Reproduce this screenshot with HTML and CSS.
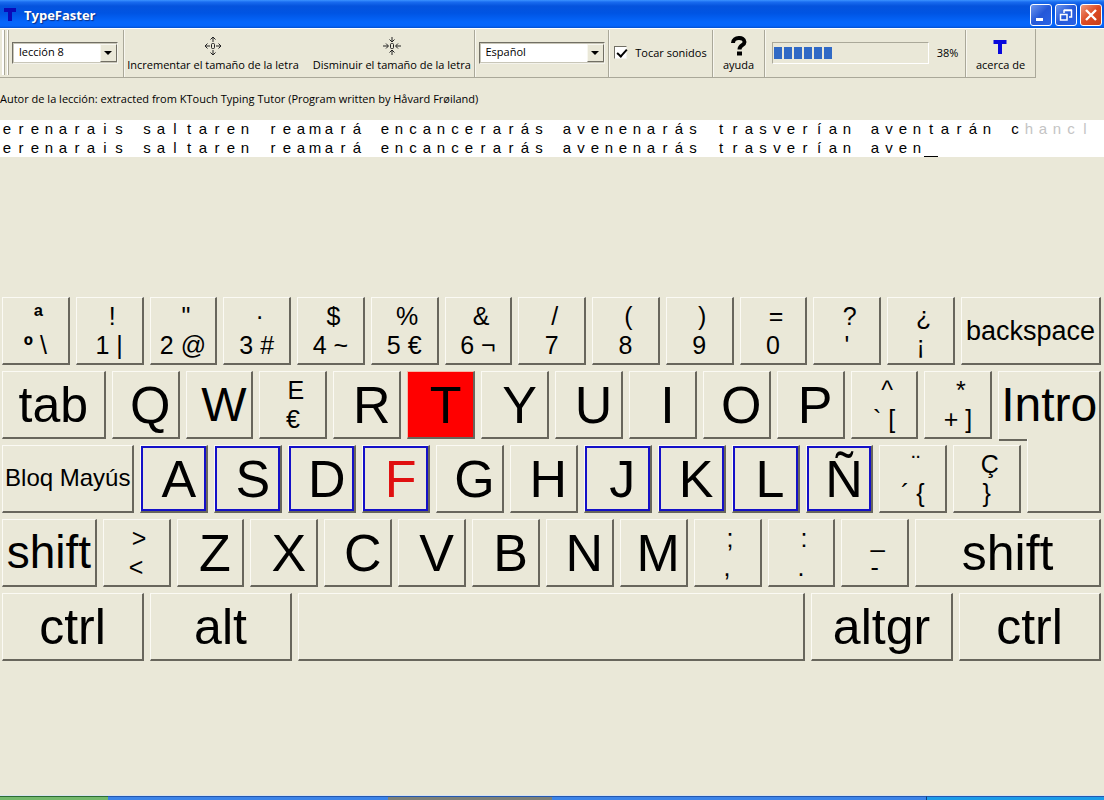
FILE: index.html
```html
<!DOCTYPE html>
<html lang="es">
<head>
<meta charset="utf-8">
<meta name="viewport" content="width=device-width, initial-scale=1">
<title>TypeFaster</title>
<link rel="stylesheet" href="styles.css">
</head>
<body>
<header class="titlebar">
  <svg class="app-icon" viewBox="0 0 14 16" aria-hidden="true"><path d="M0 1h12v4H8v9H4V5H0z" fill="#0a0ab8"/></svg>
  <h1 class="title">TypeFaster</h1>
  <div class="window-buttons">
    <button class="win-btn" type="button" aria-label="Minimizar"><svg viewBox="0 0 20 20"><path d="M5 13h7v3H5z" fill="#fff"/></svg></button>
    <button class="win-btn" type="button" aria-label="Restaurar"><svg viewBox="0 0 20 20" fill="none" stroke="#fff"><path d="M8 8V5.500h7.500V12H13M8 5h8" stroke-width="1.500"/><path d="M4.500 9.500h6.500v5.500H4.500zM4 9.500h7.500" stroke-width="1.500"/></svg></button>
    <button class="win-btn close" type="button" aria-label="Cerrar"><svg viewBox="0 0 20 20"><path d="M5 5l10 10M15 5L5 15" stroke="#fff" stroke-width="2.400"/></svg></button>
  </div>
</header>

<nav class="toolbar">
  <span class="grip"></span>
  <div class="band band-lesson">
    <span class="combo combo-lesson">
      <select aria-label="Lección"><option>lección 8</option></select>
      <span class="combo-arrow"></span>
    </span>
  </div>
  <div class="band band-size">
    <button class="tool" type="button">
      <svg width="18" height="20" viewBox="0 0 18 20" fill="none" stroke="#222"><path d="M9 1v5M9 14v5M1 10h5M12 10h5M6.500 3.500L9 1l2.500 2.500M6.500 16.500L9 19l2.500-2.500M3.500 7.500L1 10l2.500 2.500M14.500 7.500L17 10l-2.500 2.500"/><rect x="7.500" y="7.500" width="3" height="5" rx="1"/></svg>
      <span>Incrementar el tamaño de la letra</span>
    </button>
    <button class="tool" type="button">
      <svg width="18" height="20" viewBox="0 0 18 20" fill="none" stroke="#222"><path d="M9 1v5M9 14v5M0 10h5M13 10h5M6.500 3.500L9 6l2.500-2.500M6.500 16.500L9 14l2.500 2.500M3 7.500L5.500 10 3 12.500M15 7.500L12.500 10l2.500 2.500"/><rect x="7.500" y="7.500" width="3" height="5" rx="1"/></svg>
      <span>Disminuir el tamaño de la letra</span>
    </button>
  </div>
  <div class="band band-language">
    <span class="combo combo-language">
      <select aria-label="Idioma"><option>Español</option></select>
      <span class="combo-arrow"></span>
    </span>
  </div>
  <div class="band band-sound">
    <label class="check"><input type="checkbox" checked><span>Tocar sonidos</span></label>
  </div>
  <div class="band band-help">
    <button class="tool" type="button">
      <svg width="18" height="20" viewBox="0 0 18 20" fill="none"><path d="M3 7C3 0.500 14.500 0.500 14.500 6c0 3.500-5 3-5 7.500" stroke="#000" stroke-width="4"/><path d="M7 15.500h5v4H7z" fill="#000"/></svg>
      <span>ayuda</span>
    </button>
  </div>
  <div class="band band-progress">
    <progress id="progress" max="100" value="38"></progress>
    <label for="progress">38%</label>
  </div>
  <div class="band band-about">
    <button class="tool" type="button">
      <svg width="18" height="20" viewBox="0 0 18 20"><path d="M2.500 4h13v4h-4.500v10H7V8H2.500z" fill="#0808dc"/></svg>
      <span>acerca de</span>
    </button>
  </div>
</nav>

<p class="author">Autor de la lección: extracted from KTouch Typing Tutor (Program written by Håvard Frøiland)</p>

<section class="lesson">
  <div class="line" data-text="erenarais saltaren reamará encancerarás avenenarás trasverían aventarán chancl" data-fade="73"></div>
  <div class="line" data-text="erenarais saltaren reamará encancerarás avenenarás trasverían aven" data-cursor></div>
</section>

<main class="keyboard">
  <div class="row">
    <button class="key pair"><span><b>ª</b></span><span><b>º</b> \</span></button>
    <button class="key pair"><span>!</span><span>1 |</span></button>
    <button class="key pair"><span>"</span><span>2 @</span></button>
    <button class="key pair"><span>·</span><span>3 #</span></button>
    <button class="key pair"><span>$</span><span>4 ~</span></button>
    <button class="key pair"><span>%</span><span>5 €</span></button>
    <button class="key pair"><span>&amp;</span><span>6 ¬</span></button>
    <button class="key pair"><span>/</span><span>7</span></button>
    <button class="key pair"><span>(</span><span>8</span></button>
    <button class="key pair"><span>)</span><span>9</span></button>
    <button class="key pair"><span>=</span><span>0</span></button>
    <button class="key pair"><span>?</span><span>'</span></button>
    <button class="key pair"><span>¿</span><span>¡</span></button>
    <button class="key word w-backspace">backspace</button>
  </div>
  <div class="row">
    <button class="key word w-tab">tab</button>
    <button class="key">Q</button>
    <button class="key wide-glyph">W</button>
    <button class="key pair"><span>E</span><span>€</span></button>
    <button class="key">R</button>
    <button class="key target">T</button>
    <button class="key">Y</button>
    <button class="key">U</button>
    <button class="key">I</button>
    <button class="key">O</button>
    <button class="key">P</button>
    <button class="key pair"><span>^</span><span>` [</span></button>
    <button class="key pair"><span>*</span><span>+ ]</span></button>
    <button class="key word w-intro">Intro</button>
  </div>
  <div class="row">
    <button class="key word w-caps">Bloq Mayús</button>
    <button class="key home">A</button>
    <button class="key home">S</button>
    <button class="key home">D</button>
    <button class="key home finger">F</button>
    <button class="key">G</button>
    <button class="key">H</button>
    <button class="key home">J</button>
    <button class="key home">K</button>
    <button class="key home">L</button>
    <button class="key home">Ñ</button>
    <button class="key pair"><span>¨</span><span>´ {</span></button>
    <button class="key pair"><span>Ç</span><span>}</span></button>
    <span class="key intro-lower"></span>
  </div>
  <div class="row">
    <button class="key word w-lshift">shift</button>
    <button class="key pair"><span>&gt;</span><span>&lt;</span></button>
    <button class="key">Z</button>
    <button class="key">X</button>
    <button class="key">C</button>
    <button class="key">V</button>
    <button class="key">B</button>
    <button class="key">N</button>
    <button class="key">M</button>
    <button class="key pair"><span>;</span><span>,</span></button>
    <button class="key pair"><span>:</span><span>.</span></button>
    <button class="key pair"><span>_</span><span>-</span></button>
    <button class="key word w-rshift">shift</button>
  </div>
  <div class="row">
    <button class="key word w-mod">ctrl</button>
    <button class="key word w-mod">alt</button>
    <button class="key word w-space" aria-label="Espacio"></button>
    <button class="key word w-mod">altgr</button>
    <button class="key word w-mod">ctrl</button>
  </div>
</main>

<footer class="taskbar"><span class="start"></span><span class="tasks"></span><span class="active-task"></span><span class="tasks"></span><span class="tray"></span></footer>
<script src="script.js"></script>
</body>
</html>
```

FILE: styles.css
```css
* { box-sizing: border-box; }

body {
  margin: 0;
  min-height: 100vh;
  display: flex;
  flex-direction: column;
  background: #eae8d8;
  color: #000;
  font: 11px/14px "Open Sans", "Liberation Sans", sans-serif;
}

button, select { font: inherit; color: inherit; }

/* Title bar */
.titlebar {
  display: flex;
  align-items: center;
  height: 29px;
  padding: 0 2px 0 4px;
  background: linear-gradient(#3c93ff 0, #1a6cf0 2px, #0553dd 6px, #0054e3 13px, #0566fb 22px, #0565fb 26px, #0450cc 28px, #fff 28px);
}
.app-icon { width: 14px; height: 16px; }
.title {
  margin: 0 0 0 6px;
  color: #fff;
  font: bold 13px/18px "Open Sans", sans-serif;
  text-shadow: 1px 1px 1px #0a2f87;
}
.window-buttons { display: flex; gap: 3px; margin-left: auto; }
.win-btn {
  width: 22px;
  height: 22px;
  padding: 0;
  border: 1px solid #fff;
  border-radius: 3px;
  background: linear-gradient(135deg, #6e97ee, #2458d8 50%, #2a63e6);
}
.win-btn svg { display: block; width: 20px; height: 20px; }
.win-btn.close { background: linear-gradient(135deg, #ee9a80, #dd4a22 50%, #c8401a); }

/* Toolbar */
.toolbar {
  display: flex;
  align-self: flex-start;
  height: 49px;
  padding-top: 1px;
  border-right: 1px solid #aaa899;
  border-bottom: 1px solid #aaa899;
}
.grip {
  width: 9px;
  margin: 0 2px 2px 0;
  border-right: 1px solid #aaa899;
  background: linear-gradient(90deg, #eae8d8 2px, #fff 2px 4px, #aaa899 4px 5px, #eae8d8 5px 7px, #fff 7px);
}
.band {
  display: flex;
  align-items: center;
  justify-content: center;
  padding-bottom: 2px;
}
.band + .band { border-left: 1px solid #aaa899; box-shadow: inset 1px 0 #f8f7f0; }
.band-lesson { width: 112px; justify-content: flex-start; padding-left: 1px; }
.band-size { width: 351px; gap: 14px; }
.band-language { width: 134px; }
.band-sound { width: 104px; }
.band-help { width: 52px; }
.band-progress { width: 201px; gap: 8px; }
.band-about { width: 70px; }

.tool {
  display: flex;
  flex-direction: column;
  align-items: center;
  gap: 2px;
  padding: 2px 0 0;
  border: 0;
  background: none;
  white-space: nowrap;
}
.tool svg { display: block; }

.combo { position: relative; height: 22px; }
.combo-lesson { width: 106px; }
.combo-language { width: 126px; }
.combo select {
  display: block;
  width: 100%;
  height: 22px;
  padding: 0 20px 2px 6px;
  border: 1px solid;
  border-color: #716f64 #f4f3ec #f4f3ec #716f64;
  border-radius: 0;
  outline: 1px solid #c8c6b8;
  outline-offset: -2px;
  background: #fff;
  appearance: none;
}
.combo-arrow {
  position: absolute;
  top: 2px;
  right: 1px;
  width: 17px;
  height: 18px;
  border: 1px solid;
  border-color: #f8f7f0 #716f64 #716f64 #f8f7f0;
  background: #eae8d8;
  pointer-events: none;
}
.combo-arrow::after {
  content: "";
  position: absolute;
  top: 6px;
  left: 3px;
  border: 4px solid transparent;
  border-top-color: #000;
  border-bottom: 0;
}

.check { display: flex; align-items: center; gap: 8px; }
.check input {
  width: 13px;
  height: 13px;
  margin: 0;
  border: 1px solid;
  border-color: #716f64 #f4f3ec #f4f3ec #716f64;
  background: #fff;
  appearance: none;
}
.check input:checked::after {
  content: "";
  display: block;
  width: 8px;
  height: 4px;
  margin: 2px 0 0 2px;
  border: solid #000;
  border-width: 0 0 2px 2px;
  transform: rotate(-48deg);
}

progress {
  width: 157px;
  height: 22px;
  padding: 4px 1px;
  border: 1px solid;
  border-color: #aaa899 #fff #fff #aaa899;
  background: none;
  appearance: none;
}
progress::-webkit-progress-bar { background: none; }
progress::-webkit-progress-value { background: repeating-linear-gradient(90deg, #316ac5 0 8px, transparent 8px 10px); }

.author { margin: 14px 0; }

/* Lesson text: one fixed cell for each character */
.lesson {
  display: flex;
  flex-direction: column;
  gap: 1px;
  overflow: hidden;
  background: #fff;
  font-family: "Liberation Sans", Arial, sans-serif;
  font-size: 15px;
  line-height: 18px;
}
.line { display: flex; height: 18px; }
.cell { flex: none; width: 14px; text-align: center; white-space: pre; }
.cell.faded { color: #c4c4c4; }
.cell.cursor { border-bottom: 1px solid #000; }

/* Keyboard */
.keyboard {
  display: flex;
  flex-direction: column;
  gap: 6px;
  padding: 140px 3px 0 2px;
  font-family: "Liberation Sans", Arial, sans-serif;
}
.row { display: flex; gap: 6px; }
.key {
  --units: 68;
  flex: var(--units) var(--units) calc(var(--units) * 1px);
  min-width: 0;
  height: 68px;
  padding: 0 0 0 10px;
  display: flex;
  align-items: center;
  justify-content: center;
  border: solid;
  border-width: 1px 2px 2px 1px;
  border-color: #fbfaf4 #68665c #68665c #fbfaf4;
  background: transparent;
  font-family: inherit;
  font-size: 52px;
  line-height: 58px;
  white-space: nowrap;
}
.pair {
  flex-direction: column;
  padding: 0;
  font-size: 25px;
  line-height: 29px;
}
.pair span { white-space: pre; }
.pair span:first-child { padding-left: 6px; }
.wide-glyph { font-size: 48px; }
.home { box-shadow: inset 0 0 0 2px #1410c8; }
.finger { color: #e01010; }
.target { background: #f00; border-color: #f4b8a8 #68665c #68665c #f4b8a8; }

.word { padding: 0; font-size: 50px; }
.w-backspace { --units: 141; font-size: 27px; }
.w-tab { --units: 104; }
.w-caps { --units: 133; padding-bottom: 2px; font-size: 24px; }
.w-lshift { --units: 95; padding-bottom: 2px; font-size: 46px; }
.w-rshift { --units: 187; }
.w-mod { --units: 142; }
.w-space { --units: 507; }

/* The Intro key is L-shaped and runs over two rows */
.w-intro {
  --units: 103;
  position: relative;
  padding-bottom: 2px;
  border-bottom-width: 0;
  font-size: 48px;
}
.w-intro::after {
  content: "";
  position: absolute;
  left: 0;
  bottom: -2px;
  width: 28%;
  height: 2px;
  background: #68665c;
}
.intro-lower {
  --units: 74;
  height: 74px;
  margin: -6px 0 0;
  border-top: 0;
}

.taskbar {
  display: flex;
  height: 5px;
  margin-top: auto;
  border-top: 1px solid #d8e4f0;
}
.taskbar span { border-top: 1px solid #2458b0; background: #3c84e8; }
.taskbar .start { flex: 108; background: #74b86c; border-color: #2c6c34; }
.taskbar .tasks { flex: 280; }
.taskbar .active-task { flex: 164; background: #7c8078; }
.taskbar .tasks + .tray { flex: 177; background: #1c9ce8; border-left: 1px solid #0c3c78; }
.taskbar .active-task + .tasks { flex: 375; }
```

FILE: script.js
```js
document.querySelectorAll(".line").forEach(function (line) {
  var fade = Number(line.dataset.fade || Infinity);
  Array.from(line.dataset.text).forEach(function (character, index) {
    var cell = document.createElement("span");
    cell.className = index >= fade ? "cell faded" : "cell";
    cell.textContent = character;
    line.appendChild(cell);
  });
  if ("cursor" in line.dataset) {
    var cursor = document.createElement("span");
    cursor.className = "cell cursor";
    line.appendChild(cursor);
  }
});
```
